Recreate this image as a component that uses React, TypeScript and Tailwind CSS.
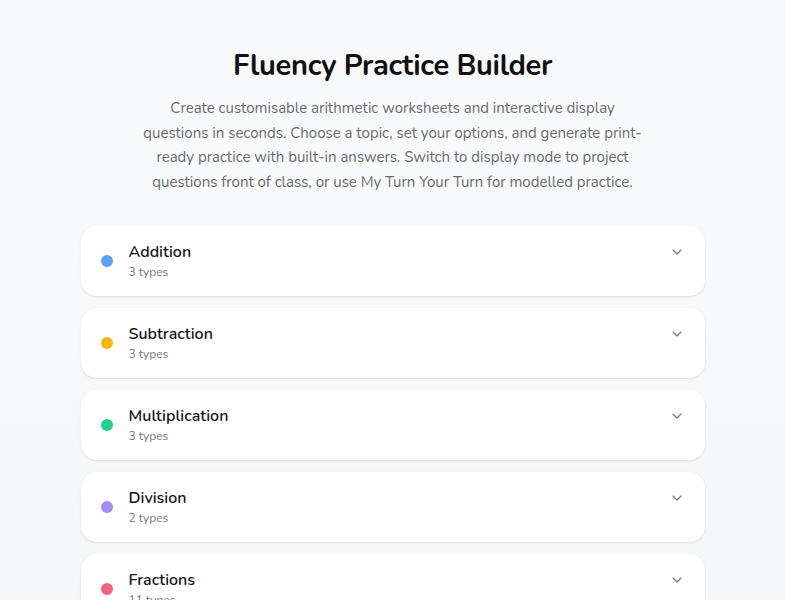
import React from 'react';
import { ChevronDown } from 'lucide-react';

const topics = [
  { name: 'Addition', types: 3, dot: 'bg-[#5aa0f5]' },
  { name: 'Subtraction', types: 3, dot: 'bg-[#f5b60a]' },
  { name: 'Multiplication', types: 3, dot: 'bg-[#1fd08e]' },
  { name: 'Division', types: 2, dot: 'bg-[#a38bf5]' },
  { name: 'Fractions', types: 11, dot: 'bg-[#f7627e]' },
  { name: 'Decimals', types: 4, dot: 'bg-[#38bdf8]' },
  { name: 'Percentages', types: 3, dot: 'bg-[#fb923c]' },
];

export default function App() {
  return (
    <div className="flex min-h-screen bg-white" style={{ fontFamily: 'Nunito, Lato, "Open Sans", sans-serif' }}>
      <main className="min-h-screen flex-1 bg-gradient-to-b from-[#f9fafb] to-[#f2f5f8] text-[#111]">
        <div className="mx-auto max-w-[672px] px-6 pt-[46px] pb-16">
          <header className="flex flex-col items-center text-center">
            <h1 className="text-[29px] font-bold leading-[40px] tracking-[-0.3px] text-[#111]">
              Fluency Practice Builder
            </h1>
            <p className="mt-[10px] max-w-[500px] text-[15px] leading-[24.7px] text-[#6b6b6b]">
              Create customisable arithmetic worksheets and interactive display questions in seconds. Choose a topic,
              set your options, and generate print-ready practice with built-in answers. Switch to display mode to
              project questions front of class, or use My Turn Your Turn for modelled practice.
            </p>
          </header>

          <div className="mt-[31px] flex flex-col gap-3">
            {topics.map((t) => (
              <button
                key={t.name}
                className="flex h-[70px] w-full items-center rounded-2xl bg-white pl-[20px] pr-[20px] text-left shadow-[0_1px_3px_rgba(0,0,0,0.08),0_1px_2px_rgba(0,0,0,0.04)]"
              >
                <span className={`mt-[1px] h-3 w-3 shrink-0 rounded-full ${t.dot}`} />
                <span className="ml-[16px] flex flex-1 flex-col self-start pt-[15px]">
                  <span className="text-[16px] font-semibold leading-[22px] text-[#161616]">{t.name}</span>
                  <span className="mt-[1px] text-[12px] leading-[16px] text-[#777]">{t.types} types</span>
                </span>
                <ChevronDown className="-mt-[18px] h-4 w-4 text-[#777]" strokeWidth={1.75} />
              </button>
            ))}
          </div>
        </div>
      </main>
      <div className="w-[15px] shrink-0 bg-white" />
    </div>
  );
}
